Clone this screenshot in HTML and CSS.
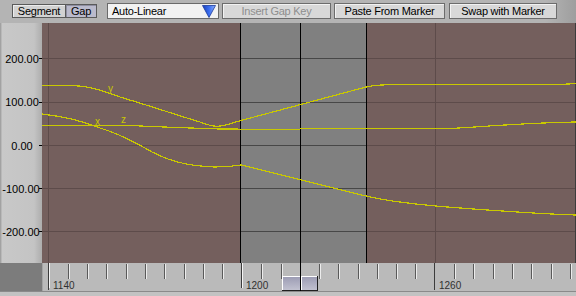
FILE: index.html
```html
<!DOCTYPE html>
<html lang="en">
<head>
  <meta charset="UTF-8" />
  <title>Gap Editor</title>
  <link rel="stylesheet" href="styles.css">
</head>
<body>
  <div class="toolbar">
    <div class="seg">
      <button class="seg-btn">Segment</button>
      <button class="seg-btn on">Gap</button>
    </div>
    <div class="dropdown">
      <span>Auto-Linear</span>
      <svg class="arrow" width="14" height="13" viewBox="0 0 14 13">
        <defs>
          <linearGradient id="tri" x1="0" y1="0" x2="1" y2="0">
            <stop offset="0" stop-color="#1a3fb8"/>
            <stop offset="0.5" stop-color="#3a6ef0"/>
            <stop offset="1" stop-color="#8fb0ff"/>
          </linearGradient>
        </defs>
        <polygon points="0.5,0.5 13.5,0.5 7,12.5" fill="url(#tri)" stroke="#1a3a9a" stroke-width="0.8"/>
      </svg>
    </div>
    <button class="btn disabled">Insert Gap Key</button>
    <button class="btn paste">Paste From Marker</button>
    <button class="btn swap">Swap with Marker</button>
  </div>

  <div class="graph-row">
    <svg class="axis" width="42" height="240" viewBox="0 23 42 240">
      <g class="axis-labels">
        <text x="22" y="62.5">200.00</text>
        <text x="22" y="106">100.00</text>
        <text x="22" y="149.5">0.00</text>
        <text x="21" y="192.5">-100.00</text>
        <text x="21" y="235.5">-200.00</text>
      </g>
      <path d="M39 58.5H42M39 102.5H42M39 145.5H42M39 188.5H42M39 231.5H42" stroke="#000" stroke-width="1"/>
    </svg>

    <svg class="plot" width="534" height="240" viewBox="42 23 534 240">
      <rect x="42" y="23" width="534" height="240" fill="#745f5d"/>
      <rect x="241" y="23" width="125" height="240" fill="#808080"/>
      <g shape-rendering="crispEdges" stroke-width="1">
        <path d="M42 58.5H241M367 58.5H576M42 102.5H241M367 102.5H576M42 145.5H241M367 145.5H576M42 188.5H241M367 188.5H576M42 231.5H241M367 231.5H576" stroke="#5d4b4a"/>
        <path d="M48.5 23V263M435.5 23V263" stroke="#5d4b4a"/>
        <path d="M241 58.5H366M241 102.5H366M241 145.5H366M241 188.5H366M241 231.5H366" stroke="#474747"/>
        <path d="M240.5 23V263M300.5 23V263M366.5 23V263" stroke="#000"/>
        <path d="M575.5 23V263" stroke="#3c3c3c"/>
      </g>
      <g class="curves" fill="none" stroke="#c9c800" stroke-width="1.2" shape-rendering="crispEdges">
        <path d="M42 85.5L72 85.5C90 86 100 90 120 97C150 106 180 116 200 122C210 126 215 127 220 126C228 125 235 122 241 120.5L366 87C375 85 385 84.5 400 84.5L560 84.5L576 83.5"/>
        <path d="M42 114C60 116 80 120 100 128C120 134 130 140 145 148C165 160 185 166 215 167C228 167 235 166 241 165L366 196C390 202 420 205 460 208C500 211 540 214 576 215"/>
        <path d="M42 125.5L130 125.5C160 127 190 128 220 129L300 129.5M300 128.5L450 128.5C480 127 520 123 576 122"/>
      </g>
      <g class="curve-labels">
        <text x="108" y="92">y</text>
        <text x="95" y="125">x</text>
        <text x="121" y="123">z</text>
      </g>
    </svg>
  </div>

  <div class="ruler-row">
    <div class="corner"></div>
    <svg class="ruler" width="534" height="28" viewBox="42 263 534 28">
      <defs>
        <linearGradient id="thumb" x1="0" y1="0" x2="0" y2="1">
          <stop offset="0" stop-color="#9a9ab2"/>
          <stop offset="1" stop-color="#c4c4d2"/>
        </linearGradient>
      </defs>
      <rect x="42" y="263" width="534" height="28" fill="#bababa"/>
      <g shape-rendering="crispEdges" stroke-width="1">
        <path d="M42.5 263V291" stroke="#a4a4a4"/>
        <path d="M68.5 264v15M87.5 264v15M106.5 264v15M126.5 264v15M145.5 264v15M164.5 264v15M184.5 264v15M203.5 264v15M222.5 264v15M261.5 264v15M281.5 264v15M319.5 264v15M338.5 264v15M358.5 264v15M377.5 264v15M396.5 264v15M415.5 264v15M454.5 264v15M473.5 264v15M493.5 264v15M512.5 264v15M531.5 264v15M551.5 264v15M570.5 264v15" stroke="#5a5a5a"/>
        <path d="M69.5 264v15M88.5 264v15M107.5 264v15M127.5 264v15M146.5 264v15M165.5 264v15M185.5 264v15M204.5 264v15M223.5 264v15M262.5 264v15M282.5 264v15M320.5 264v15M339.5 264v15M359.5 264v15M378.5 264v15M397.5 264v15M416.5 264v15M455.5 264v15M474.5 264v15M494.5 264v15M513.5 264v15M532.5 264v15M552.5 264v15M571.5 264v15" stroke="#ececec"/>
        <path d="M48.5 263V290M241.5 263V288M434.5 263V290" stroke="#3c3c3c"/>
        <path d="M49.5 263V288M242.5 263V288" stroke="#f4f4f4"/>
      </g>
      <g class="ruler-labels">
        <text x="53" y="288.5">1140</text>
        <text x="246" y="288.5">1200</text>
        <text x="439" y="288.5">1260</text>
      </g>
      <g shape-rendering="crispEdges">
        <rect x="282" y="276" width="18" height="15" fill="url(#thumb)"/>
        <rect x="301" y="276" width="17" height="15" fill="url(#thumb)"/>
        <path d="M282 276.5H300M282.5 276V291M301 276.5H318M301.5 276V291" stroke="#fff"/>
        <path d="M282 290.5H318M317.5 276V291" stroke="#202020"/>
        <path d="M300.5 263V291" stroke="#000"/>
      </g>
    </svg>
  </div>
  <div class="foot"></div>
</body>
</html>
```

FILE: styles.css
```css
* {
  box-sizing: border-box;
}

body {
  margin: 0;
  width: 576px;
  height: 296px;
  overflow: hidden;
  background: #b4b4b4;
  font-family: 'Liberation Sans', Arial, sans-serif;
  font-size: 11px;
}

.toolbar {
  height: 23px;
  display: flex;
  align-items: flex-start;
  padding: 3px 0 0 12px;
  background: linear-gradient(to right, #b4b4b4 0, #b4b4b4 545px, #9e9e9e 576px);
}

button {
  margin: 0;
  padding: 0;
  font-family: inherit;
  font-size: 11px;
  letter-spacing: -0.25px;
  color: #000;
  cursor: pointer;
}

.seg {
  display: flex;
  margin-top: 1px;
}

.seg-btn {
  height: 14px;
  line-height: 12px;
  border: 1px solid #5a5a5a;
  background: #d2d2d2;
  box-shadow: inset 1px 1px #ececec;
}

.seg-btn:first-child {
  width: 54px;
}

.seg-btn.on {
  width: 31px;
  border-left: none;
  background: #babacc;
  box-shadow: inset 1px 1px #8e8ea0;
}

.dropdown {
  width: 112px;
  height: 16px;
  margin-left: 10px;
  display: flex;
  align-items: center;
  justify-content: space-between;
  padding: 0 2px 0 4px;
  border: 1px solid #6a6a6a;
  background: #f2f2f2;
  letter-spacing: -0.25px;
}

.arrow {
  display: block;
}

.btn {
  height: 16px;
  line-height: 14px;
  margin-left: 3px;
  border: 1px solid #6c6c6c;
  background: #d8d8d8;
  box-shadow: inset 1px 1px #f2f2f2;
  text-align: center;
}

.btn.disabled {
  width: 109px;
  color: #8e8e8e;
  cursor: default;
}

.btn.paste {
  width: 111px;
}

.btn.swap {
  width: 108px;
  margin-left: 4px;
}

.graph-row {
  display: flex;
  height: 240px;
}

.axis {
  display: block;
  background: linear-gradient(to right, #9c9c9c 0, #a8a8a8 1px, #c8c8c8 2px, #c4c4c4 34px, #adadad 42px);
}

.axis-labels text {
  font-family: 'Liberation Sans', Arial, sans-serif;
  font-size: 11px;
  text-anchor: middle;
  fill: #000;
}

.plot,
.ruler {
  display: block;
}

.curve-labels text {
  font-family: 'Liberation Sans', Arial, sans-serif;
  font-size: 10px;
  fill: #c9c800;
}

.ruler-row {
  display: flex;
  height: 28px;
}

.corner {
  width: 42px;
  background: #7c7c7c;
}

.ruler-labels text {
  font-family: 'Liberation Sans', Arial, sans-serif;
  font-size: 10px;
  fill: #303030;
}

.foot {
  height: 5px;
  border-top: 1px solid #8a8a8a;
  background: #c2c2c2;
}
```
